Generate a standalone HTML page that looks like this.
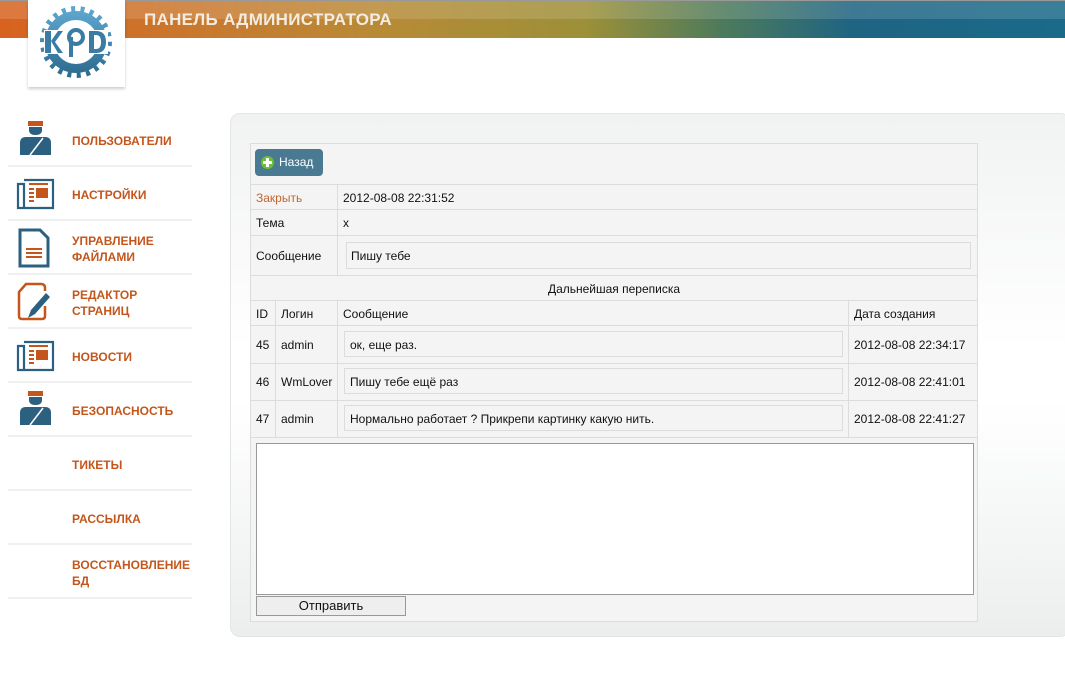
<!DOCTYPE html>
<html><head><meta charset="utf-8"><style>
*{margin:0;padding:0;box-sizing:border-box}
body{width:1065px;height:686px;background:#fff;font-family:"Liberation Sans",sans-serif;position:relative;overflow:hidden}
.hdr{position:absolute;left:0;top:0;width:1065px;height:38px;border-top:1px solid #999;background:linear-gradient(90deg,#d8621f 0%,#c9782e 18%,#b98a36 35%,#9c9038 55%,#4c7a5c 68%,#1f6482 80%,#1a6a8a 100%)}
.hdr:after{content:"";position:absolute;left:0;top:0;right:0;height:18px;background:rgba(255,255,255,.14)}
.title{position:absolute;left:144px;top:10px;color:#f3ece0;font-weight:bold;font-size:17px;letter-spacing:.3px;z-index:2}
.logo{position:absolute;left:28px;top:0;width:97px;height:87px;background:#fff;box-shadow:0 2px 3px rgba(0,0,0,.2);z-index:3}
.side{position:absolute;left:8px;width:184px;height:54px;border-bottom:2px solid #f0f0f0}
.side span{position:absolute;left:64px;color:#c4561c;font-weight:bold;font-size:12px;line-height:16px}
.side svg{position:absolute;left:8px;top:10px}
.panel{position:absolute;left:230px;top:113px;width:840px;height:524px;border:1px solid #e4e6e6;border-radius:10px;background:linear-gradient(#f1f2f2,#fff 45%,#fff 55%,#eceeee)}
.t{position:absolute;left:250px;top:143px;width:728px;height:479px;background:#f4f4f4;border:1px solid #dcdcdc;font-size:12px;color:#111}
.l{position:absolute;background:#dcdcdc}
.tx{position:absolute;line-height:14px}
.inp{position:absolute;border:1px solid #dcdcdc;background:#f4f4f4}
</style></head><body>
<div class="hdr"></div>
<div class="title">ПАНЕЛЬ АДМИНИСТРАТОРА</div>
<div class="logo"><svg width="97" height="87" viewBox="0 0 97 87">
<defs><linearGradient id="g" x1="0" y1="0" x2="0" y2="1"><stop offset="0" stop-color="#5ea6cf"/><stop offset="1" stop-color="#2f6c90"/></linearGradient></defs>
<g fill="url(#g)"><circle cx="48" cy="42" r="31"/>
<g stroke="url(#g)" stroke-width="6" stroke-dasharray="4 5.4"><circle cx="48" cy="42" r="33" fill="none"/></g></g>
<circle cx="48" cy="42" r="22" fill="#fff"/>
<rect x="16" y="30" width="64" height="24" fill="#fff"/>
<g fill="#3b7ca4"><rect x="17" y="31" width="6" height="22"/><path d="M23 41 L30 31 H35 L27 42 L35 53 H30Z"/>
<circle cx="48" cy="37" r="7" fill="none" stroke="#3b7ca4" stroke-width="4"/><rect x="41" y="37" width="4" height="20"/>
<path d="M61 31 H68 Q78 31 78 42 Q78 53 68 53 H61Z M66 35 V49 H68 Q73 49 73 42 Q73 35 68 35Z" fill-rule="evenodd"/></g>
</svg></div>

<svg width="0" height="0" style="position:absolute"><defs>
<g id="user"><rect x="12" y="0" width="15" height="5" fill="#c4561c"/><path d="M13 6 H26 V9 Q26 14 19.5 14 Q13 14 13 9Z" fill="#2b6080"/><path d="M4 34 V22 Q4 16 10 16 H29 Q35 16 35 22 V34Z" fill="#2b6080"/><path d="M14 34 L27 17" stroke="#fff" stroke-width="1.5"/></g>
<g id="news"><path d="M2 6 H8 V30 H2Z M8 2 H37 V30 H6" fill="none" stroke="#2b6080" stroke-width="2.2"/><rect x="13" y="5" width="19" height="2" fill="#c4561c"/><rect x="13" y="10" width="5" height="2" fill="#c4561c"/><rect x="13" y="14" width="5" height="2" fill="#c4561c"/><rect x="13" y="18" width="5" height="2" fill="#c4561c"/><rect x="13" y="22" width="5" height="2" fill="#c4561c"/><rect x="20" y="10" width="12" height="10" fill="#c4561c"/></g>
</defs></svg>

<div class="side" style="top:113px"><svg width="40" height="36" style="top:8px"><use href="#user"/></svg><span style="top:20px">ПОЛЬЗОВАТЕЛИ</span></div>
<div class="side" style="top:167px"><svg width="40" height="36" style="top:11px"><use href="#news"/></svg><span style="top:20px">НАСТРОЙКИ</span></div>
<div class="side" style="top:221px"><svg width="40" height="40" style="top:7px"><path d="M4 2 H24 L32 10 V38 H4Z" fill="none" stroke="#2b6080" stroke-width="3"/><rect x="10" y="20" width="16" height="2" fill="#c4561c"/><rect x="10" y="24" width="16" height="2" fill="#c4561c"/><rect x="10" y="28" width="16" height="2" fill="#c4561c"/></svg><span style="top:12px">УПРАВЛЕНИЕ<br>ФАЙЛАМИ</span></div>
<div class="side" style="top:275px"><svg width="40" height="40" style="top:7px"><path d="M29 9 V6 Q29 2 25 2 H10 L3 10 V34 Q3 37 6 37 H26 Q29 37 29 34 V24" fill="none" stroke="#c4561c" stroke-width="2.5"/><path d="M15 28 L30 11 L34 15 L19 32 L12 36Z" fill="#2b6080"/></svg><span style="top:12px">РЕДАКТОР<br>СТРАНИЦ</span></div>
<div class="side" style="top:329px"><svg width="40" height="36" style="top:11px"><use href="#news"/></svg><span style="top:20px">НОВОСТИ</span></div>
<div class="side" style="top:383px"><svg width="40" height="36" style="top:8px"><use href="#user"/></svg><span style="top:20px">БЕЗОПАСНОСТЬ</span></div>
<div class="side" style="top:437px"><span style="top:20px">ТИКЕТЫ</span></div>
<div class="side" style="top:491px"><span style="top:20px">РАССЫЛКА</span></div>
<div class="side" style="top:545px"><span style="top:12px">ВОССТАНОВЛЕНИЕ<br>БД</span></div>

<div class="panel"></div>
<div class="t">
<div style="position:absolute;left:4px;top:5px;width:68px;height:27px;background:#4a7a92;border-radius:4px;color:#fff;font-size:12px;line-height:27px;padding-left:24px">Назад</div>
<div style="position:absolute;left:10px;top:12px;width:13px;height:13px;border-radius:50%;background:#6cbf2e"></div>
<div style="position:absolute;left:12px;top:17px;width:9px;height:3px;background:#fff"></div>
<div style="position:absolute;left:15px;top:14px;width:3px;height:9px;background:#fff"></div>
<div class="l" style="left:0;top:40px;width:726px;height:1px"></div>
<div class="l" style="left:0;top:65px;width:726px;height:1px"></div>
<div class="l" style="left:0;top:91px;width:726px;height:1px"></div>
<div class="l" style="left:0;top:131px;width:726px;height:1px"></div>
<div class="l" style="left:0;top:156px;width:726px;height:1px"></div>
<div class="l" style="left:0;top:181px;width:726px;height:1px"></div>
<div class="l" style="left:0;top:219px;width:726px;height:1px"></div>
<div class="l" style="left:0;top:256px;width:726px;height:1px"></div>
<div class="l" style="left:0;top:293px;width:726px;height:1px"></div>
<div class="l" style="left:86px;top:40px;width:1px;height:91px"></div>
<div class="l" style="left:24px;top:156px;width:1px;height:137px"></div>
<div class="l" style="left:86px;top:156px;width:1px;height:137px"></div>
<div class="l" style="left:597px;top:156px;width:1px;height:137px"></div>
<div class="tx" style="left:5px;top:47px;color:#c4642e">Закрыть</div>
<div class="tx" style="left:92px;top:47px">2012-08-08 22:31:52</div>
<div class="tx" style="left:5px;top:72px">Тема</div>
<div class="tx" style="left:92px;top:72px">x</div>
<div class="tx" style="left:5px;top:105px">Сообщение</div>
<div class="inp" style="left:95px;top:98px;width:625px;height:27px"></div>
<div class="tx" style="left:100px;top:105px">Пишу тебе</div>
<div class="tx" style="left:0;width:726px;text-align:center;top:138px">Дальнейшая переписка</div>
<div class="tx" style="left:5px;top:163px">ID</div>
<div class="tx" style="left:30px;top:163px">Логин</div>
<div class="tx" style="left:92px;top:163px">Сообщение</div>
<div class="tx" style="left:603px;top:163px">Дата создания</div>
<div class="tx" style="left:5px;top:194px">45</div><div class="tx" style="left:30px;top:194px">admin</div>
<div class="inp" style="left:93px;top:187px;width:499px;height:26px"></div><div class="tx" style="left:99px;top:194px">ок, еще раз.</div>
<div class="tx" style="left:603px;top:194px">2012-08-08 22:34:17</div>
<div class="tx" style="left:5px;top:231px">46</div><div class="tx" style="left:30px;top:231px">WmLover</div>
<div class="inp" style="left:93px;top:224px;width:499px;height:26px"></div><div class="tx" style="left:99px;top:231px">Пишу тебе ещё раз</div>
<div class="tx" style="left:603px;top:231px">2012-08-08 22:41:01</div>
<div class="tx" style="left:5px;top:268px">47</div><div class="tx" style="left:30px;top:268px">admin</div>
<div class="inp" style="left:93px;top:261px;width:499px;height:26px"></div><div class="tx" style="left:99px;top:268px">Нормально работает ? Прикрепи картинку какую нить.</div>
<div class="tx" style="left:603px;top:268px">2012-08-08 22:41:27</div>
<div style="position:absolute;left:5px;top:299px;width:718px;height:152px;background:#fff;border:1px solid #999"></div>
<div style="position:absolute;left:5px;top:452px;width:150px;height:20px;background:#eee;border:1px solid #999;text-align:center;font-size:13px;line-height:18px">Отправить</div>
</div>
</body></html>
